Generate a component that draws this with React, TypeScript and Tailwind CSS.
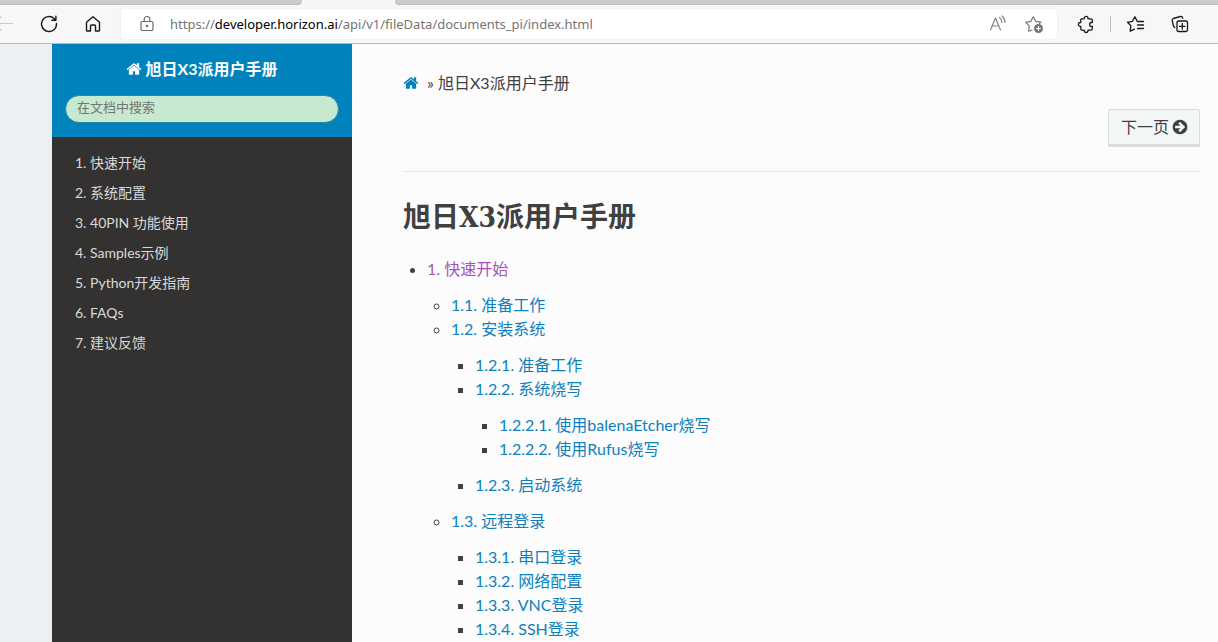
import { ReactNode } from "react";

type TocItem = {
  label: string;
  visited?: boolean;
  children?: TocItem[];
};

const menu = [
  "1. 快速开始",
  "2. 系统配置",
  "3. 40PIN 功能使用",
  "4. Samples示例",
  "5. Python开发指南",
  "6. FAQs",
  "7. 建议反馈",
];

const toc: TocItem[] = [
  {
    label: "1. 快速开始",
    visited: true,
    children: [
      { label: "1.1. 准备工作" },
      {
        label: "1.2. 安装系统",
        children: [
          { label: "1.2.1. 准备工作" },
          {
            label: "1.2.2. 系统烧写",
            children: [{ label: "1.2.2.1. 使用balenaEtcher烧写" }, { label: "1.2.2.2. 使用Rufus烧写" }],
          },
          { label: "1.2.3. 启动系统" },
        ],
      },
      {
        label: "1.3. 远程登录",
        children: [
          { label: "1.3.1. 串口登录" },
          { label: "1.3.2. 网络配置" },
          { label: "1.3.3. VNC登录" },
          { label: "1.3.4. SSH登录" },
        ],
      },
    ],
  },
];

const bullets = ["list-disc", "list-[circle]", "list-[square]", "list-[square]"];

function HomeGlyph() {
  return (
    <svg aria-hidden="true" className="size-4 shrink-0" fill="currentColor" viewBox="0 0 1792 1792">
      <path d="M1472 992v480q0 26-19 45t-45 19h-384v-384h-256v384h-384q-26 0-45-19t-19-45v-480q0-1 .5-3t.5-3l575-474 575 474q1 2 1 6zm223-69l-62 74q-8 9-21 11h-3q-13 0-21-7l-692-577-692 577q-12 8-24 7-13-2-21-11l-62-74q-8-10-7-23.5t11-21.5l719-599q32-26 76-26t76 26l244 204v-195q0-14 9-23t23-9h192q14 0 23 9t9 23v408l219 182q10 8 11 21.5t-7 23.5z" />
    </svg>
  );
}

function ArrowCircle() {
  return (
    <svg aria-hidden="true" className="size-4 shrink-0" fill="currentColor" viewBox="60 60 1672 1672">
      <path d="M1413 896q0-27-18-45l-91-91-362-362q-18-18-45-18t-45 18l-91 91q-18 18-18 45t18 45l189 189h-502q-26 0-45 19t-19 45v128q0 26 19 45t45 19h502l-189 189q-18 18-18 45t18 45l91 91q18 18 45 18t45-18l362-362 91-91q18-18 18-45zm251 0q0 209-103 385.5t-279.5 279.5-385.5 103-385.5-103-279.5-279.5-103-385.5 103-385.5 279.5-279.5 385.5-103 385.5 103 279.5 279.5 103 385.5z" />
    </svg>
  );
}

function ToolButton({ label, className = "", children }: { label: string; className?: string; children: ReactNode }) {
  return (
    <button aria-label={label} className={`flex size-5 shrink-0 items-center justify-center ${className}`} type="button">
      <svg
        className="size-5"
        fill="none"
        stroke="currentColor"
        strokeLinecap="round"
        strokeLinejoin="round"
        strokeWidth="1.2"
        viewBox="0 0 20 20"
      >
        {children}
      </svg>
    </button>
  );
}

function BrowserBar() {
  return (
    <header className="shrink-0 border-b border-[#b9b9b9] bg-[#f7f7f7]">
      <div className="flex h-[5px]">
        <div className="w-[302px] rounded-br border-b border-[#bcbcbc] bg-[#cccccc]" />
        <div className="w-[93px]" />
        <div className="flex-1 rounded-bl border-b border-[#bcbcbc] bg-[#cccccc]" />
      </div>
      <div className="flex h-[38px] items-center">
        <ToolButton className="-ml-[7px] text-[#c8c8c8]" label="后退">
          <path d="M19.500 9.500H1.500M8 3L1.500 9.500L8 16" />
        </ToolButton>
        <ToolButton className="ml-[26px] text-[#1a1a1a]" label="刷新">
          <path d="M17.500 9.500A7.500 7.500 0 1 1 15.300 4.700L16.700 6.200M16.900 2.200V6.300H12.800" strokeWidth="1.400" />
        </ToolButton>
        <ToolButton className="ml-6 text-[#1a1a1a]" label="主页">
          <path
            d="M3.500 8.300L10 2.800L16.500 8.300V16.200Q16.500 17 15.700 17H12.500V12Q12.500 11 11.500 11H8.500Q7.500 11 7.500 12V17H4.300Q3.500 17 3.500 16.200Z"
            strokeWidth="1.400"
          />
        </ToolButton>
        <div className="ml-[18px] flex h-[30px] flex-1 items-center rounded bg-white pr-[13px] pl-4 shadow-[0_0_2px_rgba(0,0,0,0.08)]">
          <ToolButton className="text-[#6b6b6b]" label="查看站点信息">
            <path d="M5.200 7.500H14.800Q16 7.500 16 8.700V15.300Q16 16.500 14.800 16.500H5.200Q4 16.500 4 15.300V8.700Q4 7.500 5.200 7.500ZM7.200 7.500V5.300A2.800 2.800 0 0 1 12.800 5.300V7.500" />
            <circle cx="10" cy="12" fill="currentColor" r=".6" />
          </ToolButton>
          <div className="ml-[13px] flex-1 font-['Noto_Sans',sans-serif] text-[13px] leading-5 whitespace-nowrap text-[#757575]">
            https://<span className="text-black">developer.horizon.ai</span>/api/v1/fileData/documents_pi/index.html
          </div>
          <ToolButton className="text-[#858585]" label="大声朗读此页内容">
            <path d="M2.500 16L7.500 4L12.500 16M4.200 12H10.800M11.500 3.500Q14 5.200 14 8.500M14 2Q17 4.500 17 8.500" />
          </ToolButton>
          <ToolButton className="ml-4 text-[#757575]" label="将此页面添加到收藏夹">
            <path d="M8 16L4.700 17.200L5.200 11.800L1.800 8.300L6.900 7.300L9.300 2.700L11.700 7.300L16.800 8.200L15.400 9.700" />
            <circle cx="14.500" cy="14.500" fill="currentColor" r="4.500" stroke="none" />
            <path d="M14.500 12.500V16.500M12.500 14.500H16.500" stroke="white" />
          </ToolButton>
        </div>
        <ToolButton className="ml-[19px] text-[#1a1a1a]" label="扩展">
          <path
            d="M5.500 4.800H8.200V4.300A1.900 1.900 0 0 1 12 4.300V4.800H14.700Q16.300 4.800 16.300 6.200V8.500H15.500A1.900 1.900 0 0 0 15.500 12.300H16.300V14.800Q16.300 16.200 14.800 16.200H12V16.600A1.900 1.900 0 0 1 8.200 16.600V16.200H6.300Q4.800 16.200 4.800 14.700V12.300H4.300A1.900 1.900 0 0 1 4.300 8.500H4.800V5.600Q4.800 4.800 5.500 4.800Z"
            strokeWidth="1.300"
          />
        </ToolButton>
        <div className="ml-3.5 h-4 w-px bg-[#bdbdbd]" />
        <ToolButton className="ml-[15px] text-[#1a1a1a]" label="收藏夹">
          <path
            d="M8.500 15.200L4.200 17.200L4.900 11.800L1.500 8.300L6.500 7.300L8.900 2.700L11.300 7.500H17.500M11.500 11H17.500M11.500 14.500H17.500"
            strokeWidth="1.300"
          />
        </ToolButton>
        <ToolButton className="mr-7 ml-6 text-[#1a1a1a]" label="集锦">
          <path
            d="M8.500 7H16Q17.500 7 17.500 8.500V16Q17.500 17.500 16 17.500H8.500Q7 17.500 7 16V8.500Q7 7 8.500 7ZM12.300 9.500V15M9.500 12.300H15M4.800 13.500Q3.800 13 3.400 11.800L2.200 6.500Q1.900 5 3.300 4.500L10.500 2.500Q12.200 2.200 12.800 4.300"
            strokeWidth="1.300"
          />
        </ToolButton>
      </div>
    </header>
  );
}

function Sidebar() {
  return (
    <nav className="w-[300px] shrink-0 bg-[#343131] text-[#d9d9d9]">
      <div className="bg-[#0083bd] px-[13px] pt-[13px] pb-3.5">
        <a className="flex items-center justify-center gap-[3px] leading-6 font-bold text-[#fcfcfc]" href="#home">
          <HomeGlyph />
          旭日X3派用户手册
        </a>
        <input
          aria-label="在文档中搜索"
          className="mt-3.5 block h-7 w-full rounded-full border border-[#2488a5] bg-[#c7e9cf] px-[11px] pb-1 text-[13px] text-[#444] placeholder:text-[#757575]"
          placeholder="在文档中搜索"
          type="text"
        />
      </div>
      <ul className="pt-[11px]">
        {menu.map((label) => (
          <li key={label}>
            <a className="block px-[23px] text-[14px] leading-[30px]" href="#menu">
              {label}
            </a>
          </li>
        ))}
      </ul>
    </nav>
  );
}

function TocList({ items, level = 0 }: { items: TocItem[]; level?: number }) {
  return (
    <ul className={`${bullets[level]} ${level ? "my-3" : ""}`}>
      {items.map((item) => (
        <li className="ml-6" key={item.label}>
          <a className={item.visited ? "text-[#a653b4]" : "text-[#0f80bb]"} href="#toc">
            {item.label}
          </a>
          {item.children ? <TocList items={item.children} level={level + 1} /> : null}
        </li>
      ))}
    </ul>
  );
}

export default function App() {
  return (
    <div className="flex h-screen flex-col overflow-hidden font-['Lato','Noto_Sans_CJK_SC',sans-serif] text-base">
      <BrowserBar />
      <div className="flex min-h-0 flex-1 bg-[#edf0f2] pl-[52px]">
        <Sidebar />
        <main className="min-w-0 flex-1 overflow-hidden bg-[#fcfcfc] pt-[27px] pr-[18px] pl-[51px] leading-6 text-[#404040]">
          <div className="flex items-center">
            <a aria-label="首页" className="text-[#0083bd]" href="#home">
              <HomeGlyph />
            </a>
            <span className="ml-2 whitespace-pre">» 旭日X3派用户手册</span>
          </div>
          <div className="mt-3.5 flex justify-end">
            <a
              className="flex h-[38px] items-center gap-[3px] rounded-xs border border-b-[3px] border-[#d9dddd] bg-[#f3f6f6] pr-[11px] pl-3"
              href="#next"
            >
              下一页
              <ArrowCircle />
            </a>
          </div>
          <hr className="mt-6 border-[#e1e4e5]" />
          <h1 className="mt-[26px] text-[28px] leading-10 font-bold font-['DejaVu_Serif_Condensed','Noto_Sans_CJK_SC',serif]">
            旭日X3派用户手册
          </h1>
          <div className="mt-[19px]">
            <TocList items={toc} />
          </div>
        </main>
      </div>
    </div>
  );
}
